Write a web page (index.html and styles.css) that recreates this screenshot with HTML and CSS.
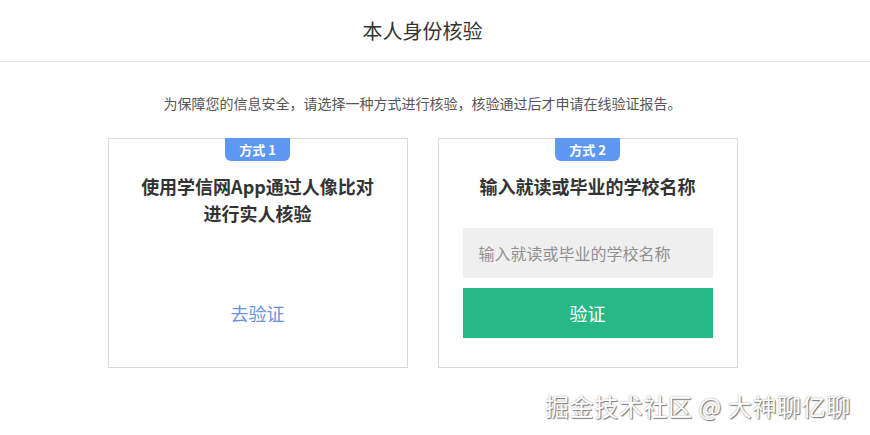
FILE: index.html
```html
<!DOCTYPE html>
<html lang="zh-CN">
<head>
<meta charset="utf-8">
<title>本人身份核验</title>
<link rel="stylesheet" href="styles.css">
</head>
<body>
<div class="page">
  <header class="header"><h1 class="title">本人身份核验</h1></header>
  <p class="intro">为保障您的信息安全，请选择一种方式进行核验，核验通过后才申请在线验证报告。</p>
  <div class="cards">
    <section class="card">
      <span class="badge">方式 1</span>
      <h2 class="card-title">使用学信网App通过人像比对<br>进行实人核验</h2>
      <a class="go" href="#">去验证</a>
    </section>
    <section class="card">
      <span class="badge">方式 2</span>
      <h2 class="card-title">输入就读或毕业的学校名称</h2>
      <div class="form">
        <input class="school" type="text" placeholder="输入就读或毕业的学校名称">
        <button class="verify" type="button">验证</button>
      </div>
    </section>
  </div>
</div>
<div class="watermark">掘金技术社区 @ 大神聊亿聊</div>
</body>
</html>
```

FILE: styles.css
```css
html, body {
  margin: 0;
  padding: 0;
  background: #fff;
}
body {
  font-family: "Noto Sans CJK SC", "Noto Sans", sans-serif;
  color: #333;
  width: 870px;
  height: 435px;
  overflow: hidden;
  position: relative;
}
.page {
  width: 845px;
}
.header {
  height: 61px;
  border-bottom: 1px solid #e6e6e6;
  display: flex;
  align-items: center;
  width: 870px;
}
.title {
  margin: 0;
  font-size: 20px;
  font-weight: normal;
  color: #333;
  line-height: 1;
  width: 845px;
  text-align: center;
}
.intro {
  margin: 31px 0 0;
  text-align: center;
  font-size: 14px;
  line-height: 20px;
  color: #555;
}
.cards {
  display: flex;
  justify-content: center;
  gap: 30px;
  margin-top: 25px;
}
.card {
  box-sizing: border-box;
  width: 300px;
  height: 230px;
  border: 1px solid #d9d9d9;
  display: flex;
  flex-direction: column;
  align-items: center;
}
.badge {
  width: 65px;
  height: 23px;
  margin-top: -1px;
  background: #5f97f4;
  color: #fff;
  font-size: 13px;
  font-weight: bold;
  line-height: 23px;
  text-align: center;
  border-radius: 0 0 6px 6px;
}
.card-title {
  margin: 12px 0 0;
  font-size: 18px;
  line-height: 27px;
  font-weight: bold;
  color: #333;
  text-align: center;
}
.go {
  margin-top: 74px;
  font-size: 18px;
  line-height: 24px;
  color: #6793e2;
  text-decoration: none;
}
.form {
  margin-top: 28px;
  width: 250px;
  display: flex;
  flex-direction: column;
  gap: 10px;
}
.school {
  box-sizing: border-box;
  width: 250px;
  height: 50px;
  border: 0;
  background: #efefef;
  padding: 0 16px;
  font-family: "Noto Sans CJK SC", sans-serif;
  font-size: 16px;
  color: #333;
  outline: none;
}
.school::placeholder {
  color: #8f8f8f;
}
.verify {
  width: 250px;
  height: 50px;
  border: 0;
  background: #26b987;
  color: #fff;
  font-family: "Noto Sans CJK SC", sans-serif;
  font-size: 18px;
  cursor: pointer;
}
.watermark {
  position: absolute;
  left: 545px;
  top: 390px;
  font-size: 24px;
  line-height: 32px;
  color: #fff;
  letter-spacing: 0.6px;
  text-shadow: 1px 1px 1px #777, 0 0 2px #999;
  font-family: "Noto Sans CJK SC", sans-serif;
  white-space: nowrap;
}
```
